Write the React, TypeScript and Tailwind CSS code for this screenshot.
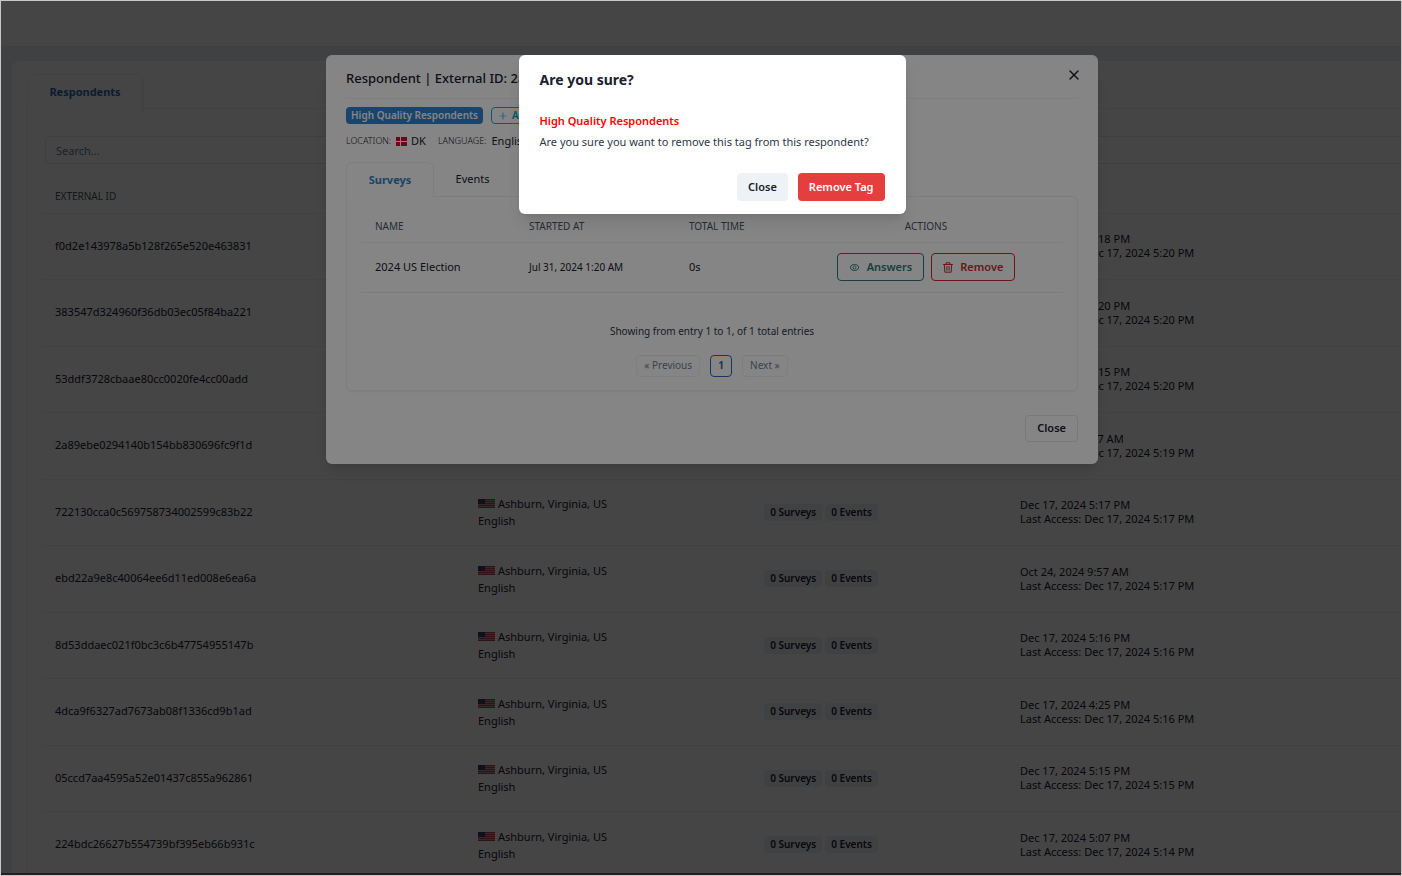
import { useState } from "react";
import { AiOutlineEye, AiOutlinePlus } from "react-icons/ai";
import { X } from "lucide-react";

type Respondent = {
  id: string;
  country: "US" | "DK";
  location: string;
  surveys: number;
  events: number;
  created: string;
  lastAccess: string;
};

const RESPONDENTS: Respondent[] = [
  { id: "f0d2e143978a5b128f265e520e463831", country: "US", location: "Ashburn, Virginia, US", surveys: 0, events: 0, created: "Dec 17, 2024 5:18 PM", lastAccess: "Dec 17, 2024 5:20 PM" },
  { id: "383547d324960f36db03ec05f84ba221", country: "US", location: "Ashburn, Virginia, US", surveys: 0, events: 0, created: "Dec 17, 2024 5:20 PM", lastAccess: "Dec 17, 2024 5:20 PM" },
  { id: "53ddf3728cbaae80cc0020fe4cc00add", country: "US", location: "Ashburn, Virginia, US", surveys: 0, events: 0, created: "Dec 17, 2024 5:15 PM", lastAccess: "Dec 17, 2024 5:20 PM" },
  { id: "2a89ebe0294140b154bb830696fc9f1d", country: "DK", location: "DK", surveys: 1, events: 0, created: "Jul 31, 2024 1:27 AM", lastAccess: "Dec 17, 2024 5:19 PM" },
  { id: "722130cca0c569758734002599c83b22", country: "US", location: "Ashburn, Virginia, US", surveys: 0, events: 0, created: "Dec 17, 2024 5:17 PM", lastAccess: "Dec 17, 2024 5:17 PM" },
  { id: "ebd22a9e8c40064ee6d11ed008e6ea6a", country: "US", location: "Ashburn, Virginia, US", surveys: 0, events: 0, created: "Oct 24, 2024 9:57 AM", lastAccess: "Dec 17, 2024 5:17 PM" },
  { id: "8d53ddaec021f0bc3c6b47754955147b", country: "US", location: "Ashburn, Virginia, US", surveys: 0, events: 0, created: "Dec 17, 2024 5:16 PM", lastAccess: "Dec 17, 2024 5:16 PM" },
  { id: "4dca9f6327ad7673ab08f1336cd9b1ad", country: "US", location: "Ashburn, Virginia, US", surveys: 0, events: 0, created: "Dec 17, 2024 4:25 PM", lastAccess: "Dec 17, 2024 5:16 PM" },
  { id: "05ccd7aa4595a52e01437c855a962861", country: "US", location: "Ashburn, Virginia, US", surveys: 0, events: 0, created: "Dec 17, 2024 5:15 PM", lastAccess: "Dec 17, 2024 5:15 PM" },
  { id: "224bdc26627b554739bf395eb66b931c", country: "US", location: "Ashburn, Virginia, US", surveys: 0, events: 0, created: "Dec 17, 2024 5:07 PM", lastAccess: "Dec 17, 2024 5:14 PM" },
];

function FlagUS() {
  return (
    <svg width="17" height="9" viewBox="0 0 17 9" className="shrink-0">
      <rect width="17" height="9" fill="#c99a9f" />
      {[0, 2, 4, 6, 8].map((y) => (
        <rect key={y} y={y} width="17" height="1" fill="#b2404c" />
      ))}
      <rect width="7" height="5" fill="#3c3b6e" />
    </svg>
  );
}

function FlagDK() {
  return (
    <svg width="11" height="9" viewBox="0 0 11 9" className="shrink-0">
      <rect width="11" height="9" fill="#c8102e" />
      <rect x="4" width="1" height="9" fill="#fff" />
      <rect y="4" width="11" height="1" fill="#fff" />
    </svg>
  );
}

function TrashIcon() {
  return (
    <svg width="10" height="11" viewBox="0 0 10 11" fill="none" stroke="currentColor" strokeLinecap="round" strokeLinejoin="round">
      <path d="M0.5 2.5h9M3 2.5V0.8h4v1.7M1.3 2.5l0.5 7.7h6.4l0.5-7.7" />
      <path d="M3.6 4.4v4M5 4.4v4M6.4 4.4v4" strokeWidth="0.7" />
    </svg>
  );
}

function RespondentsPage() {
  return (
    <div className="w-[110%]">
      <header className="h-[46px] border-b border-[#e2e8f0] bg-white" />
      <main className="bg-[#edf2f7] pt-[14px] pl-[11px]">
        <div className="rounded-tl-lg bg-white pt-[13px] pl-[15px]">
          <nav className="flex">
            <button className="-mb-px h-[35px] w-[116px] rounded-t-md border border-b-0 border-[#edf2f7] bg-white text-[11px] font-bold text-[#2b6cb0]">
              Respondents
            </button>
          </nav>
          <section className="border-t border-l border-[#edf2f7] px-[14px] pt-[27px] shadow-xs">
            <div className="px-[3px]">
              <input
                aria-label="Search"
                placeholder="Search..."
                className="h-7 w-full rounded-md border border-[#e2e8f0] px-[10px] text-[11px] placeholder:text-[#718096]"
              />
            </div>
            <table className="mt-[15px] w-full table-fixed border-collapse text-left text-[#1a202c]">
              <colgroup>
                <col className="w-[423px]" />
                <col className="w-[170px]" />
                <col className="w-[372px]" />
                <col />
              </colgroup>
              <thead>
                <tr className="h-[34px] border-b border-[#edf2f7] text-[10px] text-[#4a5568] uppercase">
                  <th className="px-[13px] pt-[2px] font-normal">External ID</th>
                  <th className="px-[13px] pt-[2px] font-normal">Location</th>
                  <th className="px-[13px] pt-[2px] text-center font-normal">Activity</th>
                  <th className="px-[13px] pt-[2px] font-normal">Date</th>
                </tr>
              </thead>
              <tbody>
                {RESPONDENTS.map((r) => (
                  <tr key={r.id} className="border-b border-[#edf2f7] text-[11px] odd:h-[66px] even:h-[67px]">
                    <td className="px-[13px]">{r.id}</td>
                    <td className="px-[13px] leading-[17px] whitespace-nowrap">
                      <span className="flex items-center gap-[3px]">
                        {r.country === "US" ? <FlagUS /> : <FlagDK />}
                        {r.location}
                      </span>
                      English
                    </td>
                    <td className="px-[13px]">
                      <div className="flex justify-center gap-[3px] text-[10px] leading-[17px] font-semibold">
                        <span className="rounded-sm bg-[#edf2f7] px-[6px]">{r.surveys} Surveys</span>
                        <span className="rounded-sm bg-[#edf2f7] px-[6px]">{r.events} Events</span>
                      </div>
                    </td>
                    <td className="px-[13px] leading-[14px]">
                      {r.created}
                      <br />
                      Last Access: {r.lastAccess}
                    </td>
                  </tr>
                ))}
              </tbody>
            </table>
          </section>
        </div>
      </main>
    </div>
  );
}

function RespondentDialog() {
  const [tab, setTab] = useState("surveys");

  return (
    <div role="dialog" aria-label="Respondent" className="w-[772px] rounded-md bg-white px-5 pb-[22px] text-[#1a202c] shadow-lg">
      <header className="flex h-11 items-center justify-between border-b border-[#edf2f7] pt-1">
        <h2 className="text-[13px] font-medium">Respondent | External ID: 2a89ebe0294140b154bb830696fc9f1d</h2>
        <button aria-label="Close respondent" className="-mr-1 pb-2">
          <X size={16} strokeWidth={2} />
        </button>
      </header>

      <div className="mt-2 flex gap-2 text-[10px] font-semibold">
        <span className="flex h-[17px] items-center rounded-sm bg-[#3182ce] px-[5px] text-white">High Quality Respondents</span>
        <button className="flex h-[17px] items-center gap-1 rounded-sm border border-[#00b5d8] px-[6px] text-[#00a3c4]">
          <AiOutlinePlus size={10} />
          Add Tag
        </button>
      </div>

      <div className="mt-2 flex h-[18px] items-center text-[11px]">
        <span className="mr-[5px] text-[9px] font-light text-[#1a202c]">LOCATION:</span>
        <FlagDK />
        <span className="ml-1">DK</span>
        <span className="mr-[5px] ml-[12px] text-[9px] font-light text-[#1a202c]">LANGUAGE:</span>
        <span>English</span>
      </div>

      <nav className="mt-3 flex">
        <button
          onClick={() => setTab("surveys")}
          className="-mb-px h-[35px] w-[88px] rounded-t-md border border-b-0 border-[#edf2f7] bg-white text-[11px] font-bold text-[#3182ce]"
        >
          Surveys
        </button>
        <button onClick={() => setTab("events")} className="h-[34px] w-[77px] text-[11px]">
          Events
        </button>
      </nav>

      <section aria-label={tab} className="rounded-b-md rounded-tr-md border border-[#edf2f7] px-[14px] pt-[14px] pb-[13px] shadow-xs">
        <table className="w-full table-fixed border-collapse text-left">
          <colgroup>
            <col className="w-[154px]" />
            <col className="w-[160px]" />
            <col className="w-[114px]" />
            <col />
          </colgroup>
          <thead>
            <tr className="h-[31px] border-b border-[#edf2f7] text-[10px] text-[#4a5568] uppercase">
              <th className="px-[14px] font-normal">Name</th>
              <th className="px-[14px] font-normal">Started at</th>
              <th className="px-[14px] font-normal whitespace-nowrap">Total time</th>
              <th className="px-[14px] text-center font-normal">Actions</th>
            </tr>
          </thead>
          <tbody>
            <tr className="h-[50px] border-b border-[#edf2f7] text-[11px]">
              <td className="px-[14px]">2024 US Election</td>
              <td className="px-[14px] text-[10px]">Jul 31, 2024 1:20 AM</td>
              <td className="px-[14px]">0s</td>
              <td>
                <div className="flex justify-center gap-[7px] text-[11px] font-semibold">
                  <button className="flex h-7 items-center gap-[7px] rounded-sm border border-[#2c7a7b] px-[11px] text-[#2c7a7b]">
                    <AiOutlineEye size={11} />
                    Answers
                  </button>
                  <button className="flex h-7 items-center gap-[7px] rounded-sm border border-[#c53030] px-[11px] text-[#c53030]">
                    <TrashIcon />
                    Remove
                  </button>
                </div>
              </td>
            </tr>
          </tbody>
        </table>
        <p className="mt-[30px] text-center text-[10px] leading-4 text-[#2d3748]">Showing from entry 1 to 1, of 1 total entries</p>
        <div className="mt-4 flex justify-center gap-[10px] text-[10px] text-[#718096]">
          <button className="h-[22px] rounded-sm border border-[#edf2f7] px-[7px]">« Previous</button>
          <button className="h-[22px] w-[22px] rounded-sm border border-[#2b6cb0] font-bold text-[#2b6cb0]">1</button>
          <button className="h-[22px] rounded-sm border border-[#edf2f7] px-[7px]">Next »</button>
        </div>
      </section>

      <footer className="mt-6 flex justify-end">
        <button className="h-[27px] rounded-sm border border-[#e2e8f0] px-[11px] text-[11px] font-semibold">Close</button>
      </footer>
    </div>
  );
}

function ConfirmDialog() {
  return (
    <div role="alertdialog" aria-label="Are you sure?" className="w-[387px] rounded-md bg-white px-[21px] pb-[13px] text-[#1a202c] shadow-lg">
      <h2 className="flex h-[50px] items-center text-sm font-bold">Are you sure?</h2>
      <div className="mt-[5px] text-[11px] leading-[21px]">
        <p className="font-semibold text-[#ff0000]">High Quality Respondents</p>
        <p className="text-[#2d3748]">Are you sure you want to remove this tag from this respondent?</p>
      </div>
      <footer className="mt-[21px] flex justify-end gap-[10px] text-[11px] font-semibold">
        <button className="h-7 rounded-sm bg-[#edf2f7] px-[11px]">Close</button>
        <button className="h-7 rounded-sm bg-[#e53e3e] px-[11px] text-white">Remove Tag</button>
      </footer>
    </div>
  );
}

export default function App() {
  return (
    <div className="relative h-screen overflow-hidden border border-[#c8c8c8] bg-white font-['Noto_Sans','Open_Sans',sans-serif]">
      <RespondentsPage />
      <div className="absolute inset-y-0 -right-[22px] left-0 flex items-start justify-center bg-black/48 pt-[54px]">
        <RespondentDialog />
      </div>
      <div className="absolute inset-y-0 -right-[22px] left-0 flex items-start justify-center border-b-2 border-[#231f20] bg-black/48 pt-[54px]">
        <ConfirmDialog />
      </div>
    </div>
  );
}
